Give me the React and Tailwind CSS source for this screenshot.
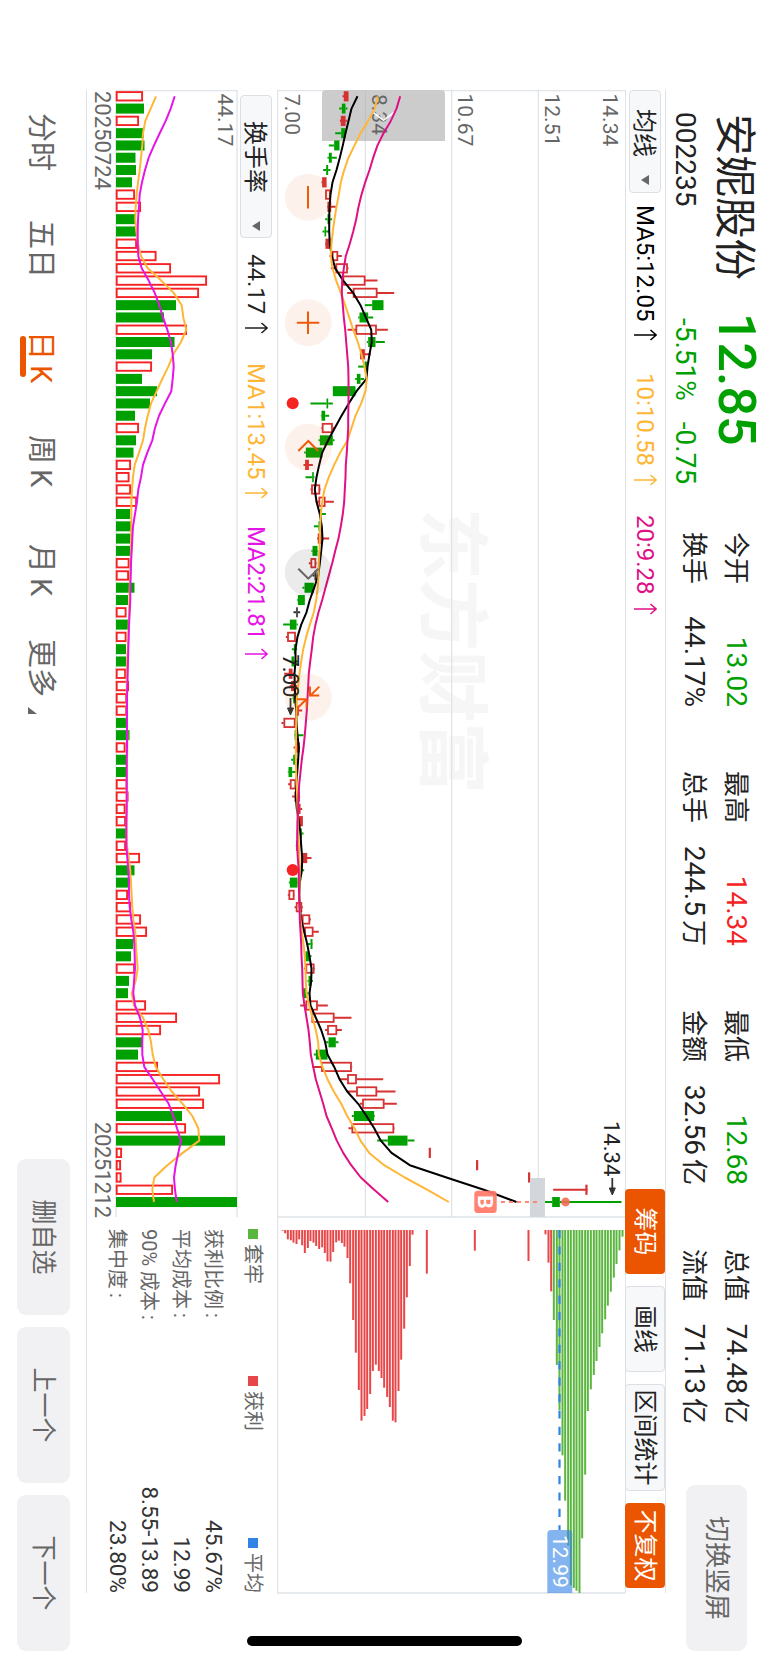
import React from 'react';

// candle: [kind, low, bodyLow, bodyHigh, high]
const candles = [
  ['r', 248, 253, 265, 265], ['g', 238, 246, 257, 263], ['r', 240, 244, 256, 262], ['g', 226, 244, 257, 257],
  ['g', 207, 223, 239, 239], ['g', 203, 207, 216, 231], ['g', 190, 199, 205, 212], ['r', 185, 188, 199, 199],
  ['r', 196, 197, 212, 212], ['r', 202, 204, 213, 228], ['g', 196, 203, 211, 217], ['g', 188, 194, 199, 210],
  ['r', 196, 198, 211, 211], ['r', 209, 217, 234, 246], ['r', 213, 228, 263, 266], ['r', 246, 249, 316, 353],
  ['r', 262, 280, 352, 403], ['g', 315, 337, 371, 371], ['g', 295, 299, 325, 340], ['r', 263, 288, 350, 384],
  ['g', 321, 325, 347, 375], ['r', 300, 302, 314, 333], ['g', 295, 314, 323, 323], ['g', 286, 291, 302, 313],
  ['g', 219, 219, 287, 293], ['g', 152, 200, 205, 219], ['g', 183, 185, 196, 208], ['r', 185, 187, 218, 222],
  ['g', 176, 180, 219, 224], ['g', 133, 138, 188, 190], ['r', 131, 137, 146, 159], ['g', 137, 157, 162, 164],
  ['r', 152, 155, 180, 182], ['r', 168, 177, 196, 222], ['g', 178, 181, 185, 198], ['g', 162, 176, 182, 182],
  ['r', 172, 175, 184, 208], ['g', 155, 158, 173, 175], ['r', 147, 153, 168, 170], ['k', 158, 164, 170, 178],
  ['g', 128, 134, 162, 165], ['g', 112, 114, 135, 136], ['k', 101, 109, 114, 121], ['g', 70, 90, 110, 114],
  ['r', 78, 83, 107, 109], ['g', 96, 102, 108, 112], ['g', 91, 95, 103, 115], ['r', 73, 88, 97, 104],
  ['r', 90, 95, 105, 112], ['g', 98, 100, 108, 110], ['r', 108, 112, 116, 127], ['r', 65, 72, 106, 108],
  ['g', 104, 105, 109, 131], ['r', 101, 108, 119, 121], ['g', 94, 100, 108, 110], ['g', 84, 86, 97, 115],
  ['r', 85, 91, 108, 110], ['r', 97, 105, 119, 121], ['r', 110, 117, 121, 127], ['r', 112, 117, 128, 128],
  ['g', 118, 120, 126, 131], ['r', 108, 110, 116, 118], ['r', 124, 128, 141, 155], ['g', 118, 122, 127, 133],
  ['g', 87, 90, 113, 115], ['r', 84, 87, 103, 104], ['r', 104, 109, 126, 129], ['r', 123, 127, 150, 153],
  ['r', 131, 134, 160, 177], ['g', 140, 152, 158, 159], ['g', 134, 137, 149, 155], ['r', 133, 138, 163, 165],
  ['g', 143, 146, 155, 159], ['g', 127, 130, 141, 146], ['r', 121, 138, 173, 204], ['r', 155, 156, 223, 275],
  ['r', 196, 203, 231, 246], ['g', 199, 206, 228, 236], ['g', 162, 168, 203, 205], ['r', 158, 185, 275, 277],
  ['r', 238, 263, 290, 370], ['r', 263, 290, 351, 407], ['r', 300, 308, 373, 411], ['g', 276, 282, 343, 345],
  ['r', 266, 276, 402, 404], ['g', 352, 384, 443, 464], ['r', 511, 511, 512, 512], ['r', 653, 653, 654, 654],
  ['r', 809, 809, 810, 810], ['r', 880, 981, 982, 983], ['g', 854, 877, 900, 1085],
];

const ma5 = [
  293, 275, 266, 257, 249, 240, 230, 218, 212, 209, 208, 208, 210, 216, 226, 250, 280, 302, 318, 334, 336, 329, 323,
  320, 290, 267, 245, 225, 205, 187, 178, 170, 165, 170, 180, 186, 188, 184, 180, 175, 163, 150, 140, 124, 113, 107,
  107, 104, 105, 106, 109, 110, 113, 117, 115, 112, 109, 108, 111, 117, 122, 124, 127, 126, 120, 118, 120, 124, 133,
  142, 149, 155, 154, 149, 152, 168, 184, 196, 203, 223, 239, 262, 295, 320, 343, 363, 395, 450, 560, 672, 770,
];
const ma10 = [
  354, 345, 325, 302, 284, 266, 253, 243, 237, 230, 224, 219, 215, 213, 218, 229, 243, 256, 268, 280, 294, 305, 314,
  321, 317, 304, 287, 275, 263, 241, 223, 207, 194, 187, 183, 181, 180, 179, 177, 176, 174, 169, 162, 150, 139, 130,
  124, 119, 115, 111, 110, 109, 109, 108, 108, 109, 110, 112, 113, 114, 115, 117, 119, 120, 119, 118, 119, 122, 126,
  131, 135, 137, 138, 140, 148, 158, 168, 175, 177, 188, 203, 222, 244, 262, 284, 302, 328, 373, 435, 503, 567,
];
const ma20 = [
  421, 410, 393, 371, 353, 340, 329, 316, 305, 296, 289, 280, 270, 258, 252, 247, 246, 249, 252, 256, 259, 262, 265,
  266, 266, 266, 265, 265, 263, 261, 258, 257, 255, 253, 249, 243, 236, 226, 217, 207, 197, 187, 176, 167, 160, 156,
  151, 147, 145, 143, 141, 138, 135, 131, 126, 122, 118, 116, 115, 113, 112, 112, 114, 117, 117, 118, 119, 120, 122,
  124, 125, 127, 128, 129, 134, 140, 146, 150, 153, 160, 168, 179, 190, 200, 216, 231, 250, 274, 303, 343, 385,
];

// turnover: negative values are falling days
const turnover = [
  27, -28, 23, -28, -28.5, -19.5, -20, -16, 19, 25, -20, -20, 21, 40.5, 55, 91, 83, -60, -48, 71, -58.5, -36, 36, -26,
  -41, -34, -19, 23, -20, -17.5, 15, 13.5, 15, 21, -14, -15, -15, -15, 13.5, 13, -18.5, -12, 10.5, -12, 10.5, -10, -10,
  10, 13, 11, 11, -11, -13.5, 9.5, -10, -10, 11.5, 12.5, 9.5, 10, -10, 10, 24, -18.5, -14, 12, 15, 25, 31, -17, -15,
  19, -13, -12, 30, 61, 45, -27, -22, 42, 104, 84, 88, -66, 70, -109, 6, 5, 5.5, 57, -121,
];
const turnoverMa1 = [
  229, 213, 197, 190, 188, 184, 180, 175, 171, 168, 167, 170, 175, 184, 204, 245, 282, 306, 311, 320, 304, 281, 266,
  248, 231, 214, 204, 196, 190, 178, 165, 160, 157, 155, 155, 155, 154, 154, 153, 152, 150, 149, 148, 147, 146, 144,
  142, 141, 141, 141, 141, 142, 143, 143, 142, 142, 141, 141, 141, 141, 141, 142, 147, 152, 154, 156, 158, 161, 167,
  169, 171, 174, 168, 156, 163, 190, 206, 214, 219, 228, 251, 276, 309, 338, 356, 359, 309, 263, 224, 218, 223,
];
const turnoverMa2 = [
  285, 273, 258, 240, 223, 207, 196, 187, 180, 178, 175, 174, 174, 176, 186, 207, 225, 239, 250, 263, 274, 279, 282,
  279, 275, 256, 238, 226, 218, 203, 190, 184, 176, 172, 166, 160, 158, 156, 154, 153, 152, 152, 150, 148, 147, 146,
  145, 144, 143, 142, 142, 142, 142, 142, 141, 141, 141, 141, 141, 140, 140, 140, 143, 146, 148, 148, 150, 155, 161,
  164, 165, 166, 163, 161, 166, 181, 189, 188, 188, 194, 219, 243, 267, 281, 292, 304, 296, 288, 283, 286, 291,
];

// chip distribution: [price level, bar end]
const profitChips = [
  [68, 422], [76, 430], [84, 448], [93, 451], [101, 458], [110, 462], [118, 448], [127, 466], [135, 489], [144, 474],
  [152, 453], [161, 458], [169, 468], [178, 477], [187, 472], [195, 489], [203, 514], [212, 515], [220, 486],
  [229, 457], [237, 452], [246, 459], [254, 470], [263, 504], [271, 580], [280, 690], [288, 788], [297, 900],
  [305, 992], [314, 978], [322, 957], [331, 912], [339, 843], [348, 824], [357, 843], [365, 864], [373, 893],
  [382, 921], [390, 951], [399, 992], [407, 997], [416, 903], [424, 809], [433, 716], [441, 622], [450, 528],
  [458, 434], [501, 551], [645, 482], [806, 513], [857, 433], [866, 518], [874, 604],
];
const lossChips = [
  [882, 690], [891, 825], [899, 960], [908, 1096], [916, 1232], [925, 1366], [933, 1486], [942, 1494], [950, 1502],
  [959, 1509], [967, 1345], [976, 1154], [984, 963], [993, 898], [1002, 855], [1010, 813], [1019, 771], [1027, 730],
  [1036, 688], [1044, 647], [1053, 605], [1062, 563], [1070, 522], [1079, 481], [1088, 440],
];

const stats = [
  ['今开', '13.02', '', 'text-[#00a000]', '换手', '44.17%', ''],
  ['最高', '14.34', '', 'text-[#f52323]', '总手', '244.5', '万'],
  ['最低', '12.68', '', 'text-[#00a000]', '金额', '32.56', '亿'],
  ['总值', '74.48', '亿', 'text-[#222]', '流值', '71.13', '亿'],
];

const tabs = [
  ['分时', 'w-[107px]'],
  ['五日', 'w-[111px]'],
  ['日K', 'w-[104px]'],
  ['周K', 'w-[109px]'],
  ['月K', 'w-[95px]'],
  ['更多', 'w-[80px]'],
];

const colors = { r: '#d63232', g: '#00a000', k: '#333' };

const xAt = (i) => 6.3 + i * 12.286;
const priceY = (v) => 347.5 - (v - 53) / 3;
const volY = (v) => 124 - (v - 109) / 3;
const line = (data, toY) => data.map((v, i) => `${xAt(i).toFixed(1)},${toY(v).toFixed(1)}`).join(' ');

function UpArrow() {
  return (
    <svg className="ml-2 h-[23px] w-3" viewBox="0 0 12 23" fill="none" stroke="currentColor" strokeWidth="1.6">
      <path d="M6 23V.8M1 6.500l5-5.700 5 5.700" />
    </svg>
  );
}

function Indicator({ children, className }) {
  return <div className={`flex items-center text-[24px] leading-8 ${className}`}>{children}<UpArrow /></div>;
}

function Select({ children, className }) {
  return (
    <div className={`flex h-8 items-center rounded border border-[#dcdfe4] bg-[#f6f8fa] pt-0.5 text-[24px] leading-none text-[#222] ${className}`}>
      {children}
      <svg className="mb-0.5 ml-auto h-2 w-[10px]" viewBox="0 0 10 8"><path d="M0 0h10L5 8z" fill="#666" /></svg>
    </div>
  );
}

function Candle({ data, i }) {
  const [kind, low, bodyLow, bodyHigh, high] = data;
  const x = xAt(i);
  const c = colors[kind];
  const top = priceY(bodyHigh);
  const h = Math.max(priceY(bodyLow) - top, 1);
  return (
    <g stroke={c} strokeWidth="2">
      <path d={`M${x} ${priceY(high)}V${top}M${x} ${top + h}V${priceY(low)}`} />
      {kind === 'r' ? (
        <rect x={x - 4.2} y={top + 0.5} width="8.4" height={Math.max(h - 1, 0.4)} fill={h < 4.5 ? c : 'none'} strokeWidth="1.8" />
      ) : (
        <rect x={x - 5} y={top} width="10" height={Math.max(h, 1.6)} fill={c} stroke="none" />
      )}
    </g>
  );
}

function PriceChart() {
  return (
    <svg className="block h-[348px] w-[1504px]" viewBox="0 0 1504 348">
      <text x="418" y="198.500" fontSize="72" fontWeight="700" fill="#f6f6f6" textLength="286">东方财富</text>
      <g stroke="#e0e4e8" strokeWidth="1.3" fill="none">
        <path d="M0 86.7h1127M0 173.3h1127M0 259.7h1127" />
        <path d="M.6 0v347.5h1502.4V0M1127 0v347.5" />
      </g>
      <path d="M51 180v123H4a4 4 0 0 1-4-4V184a4 4 0 0 1 4-4z" fill="#ccc" />
      <path d="M0 259.7h51" stroke="#c0c0c3" />
      <g fontSize="21" fill="#666">
        <text x="3.500" y="22.5">14.34</text>
        <text x="3.500" y="80.5">12.51</text>
        <text x="3.500" y="167">10.67</text>
        <text x="4" y="253.5">8.34</text>
        <text x="4" y="340">7.00</text>
      </g>
      <path d="M22.3 252l8-10.5-8-10.5" fill="none" stroke="#fff" strokeWidth="1.6" />

      {candles.map((c, i) => <Candle key={i} data={c} i={i} />)}
      <rect x="1088" y="80" width="39" height="15" fill="#d3d6db" />
      <g fill="none" strokeWidth="2" strokeLinejoin="round">
        <polyline points={line(ma5, priceY)} stroke="#000" />
        <polyline points={line(ma10, priceY)} stroke="#ffb636" />
        <polyline points={line(ma20, priceY)} stroke="#df1086" />
      </g>

      <circle cx="313.3" cy="332.3" r="6" fill="#f52323" />
      <circle cx="780" cy="332.3" r="6" fill="#f52323" />
      <path d="M1112 124V86" stroke="#ff8674" strokeWidth="1.8" strokeDasharray="4 4" />
      <circle cx="1112" cy="59.5" r="4.4" fill="#f36b52" fillOpacity=".9" />
      <rect x="1100.7" y="128.3" width="22.4" height="22.4" rx="3.5" fill="#ff7767" fillOpacity=".92" />
      <text x="1111.9" y="147" fontSize="21" fontWeight="700" fill="#fff" textAnchor="middle">B</text>

      <g fontSize="22" fill="#222">
        <text x="564.500" y="342.5">7.00</text>
        <text x="1031" y="21">14.34</text>
      </g>
      <g stroke="#333" fill="#333" strokeWidth="1.8">
        <path d="M608 334.500h11" />
        <path d="M618 331.500l7 3-7 3z" strokeWidth="1" />
        <path d="M1088 12.700h11" />
        <path d="M1098 9.700l7 3-7 3z" strokeWidth="1" />
      </g>

      {/* floating zoom / pan controls */}
      <g fill="#eb5500" fillOpacity=".08">
        <circle cx="107.3" cy="316.7" r="23.5" />
        <circle cx="232.7" cy="316.7" r="23.5" />
        <circle cx="357.3" cy="316.7" r="23.5" />
        <circle cx="607.3" cy="316.7" r="23.5" />
      </g>
      <circle cx="482.3" cy="316.7" r="23.5" fillOpacity=".08" />
      <g fill="none" stroke="#f05a0a" strokeWidth="2">
        <path d="M96 317h22.500M221.500 317h22.500M232.700 305.700v22.500" />
        <path d="M361 306.700l-10 10 10 10" />
        <path d="M596.600 305.700l9 9M596.600 315h9v-9.300M618.300 327.700l-9-9M609.300 327.700v-9.300h9" />
      </g>
      <path d="M478.700 306.700l10 10-10 10" fill="none" stroke="#666" strokeWidth="2" />

      {profitChips.map(([p, end]) => (
        <rect key={p} x="1140" y={priceY(p) - 1} width={(end - 420) / 3} height="2" fill="#e8474a" />
      ))}
      {lossChips.map(([p, end]) => (
        <rect key={p} x="1140" y={priceY(p) - 1} width={(end - 420) / 3} height="2" fill="#5bb63f" />
      ))}
      <path d={`M1140 ${priceY(899)}h300`} stroke="#3282e6" strokeWidth="2.2" strokeDasharray="8.200 8.200" />
      <path d="M1444 52.700h59v25h-59a4 4 0 0 1-4-4v-17a4 4 0 0 1 4-4z" fill="#3282e6" fillOpacity=".6" />
      <text x="1445" y="72.500" fontSize="21" fill="#fff">12.99</text>
    </svg>
  );
}

function TurnoverChart() {
  return (
    <svg className="block h-[151px] w-[1128px]" viewBox="0 0 1128 151">
      <path d="M1127 3H.6v121H1127" fill="none" stroke="#dfe2e6" strokeWidth="1.3" />
      <text x="3.500" y="22.500" fontSize="21" fill="#666">44.17</text>
      {turnover.map((v, i) => {
        const h = Math.abs(v);
        return v < 0 ? (
          <rect key={i} x={xAt(i) - 5} y={124 - h} width="10" height={h} fill="#00a000" />
        ) : (
          <rect key={i} x={xAt(i) - 4.200} y={124.900 - h} width="8.400" height={h - 1.600} fill="none" stroke="#f52323" strokeWidth="1.900" />
        );
      })}
      <g fill="none" strokeWidth="2" strokeLinejoin="round">
        <polyline points={line(turnoverMa1, volY)} stroke="#ffb636" />
        <polyline points={line(turnoverMa2, volY)} stroke="#e614e6" />
      </g>
      <g fontSize="22" fill="#666">
        <text x="1" y="145">20250724</text>
        <text x="1128" y="145" textAnchor="end" textLength="96">20251212</text>
      </g>
    </svg>
  );
}

function Header() {
  return (
    <header className="flex h-[102px] w-[1561px] shrink-0 pl-[22px]">
      <div className="w-[201px] pt-[7px] text-[#222]">
        <div className="relative left-0.5 top-0.5 text-[41.500px] leading-[50px]">安妮股份</div>
        <div className="mt-[11px] text-[28px] leading-[30px]">002235</div>
      </div>
      <div className="w-[219px] pt-[7px] text-[#00a000]">
        <div className="text-[52px] font-medium leading-[50px]">12.85</div>
        <div className="mt-[11px] flex gap-[21px] pl-[5px] text-[28px] leading-[30px]">
          <span>-5.51%</span>
          <span>-0.75</span>
        </div>
      </div>
      <div className="flex gap-[64px] pt-[11px] text-[28px] leading-[41px] text-[#222]">
        {stats.map(([a, av, au, color, b, bv, bu]) => (
          <div key={a} className="w-[175px]">
            <div className="flex items-baseline justify-between">
              <span className="text-[26px]">{a}</span>
              <span className={color}>{av}{au && <span className="ml-1 text-[26px]">{au}</span>}</span>
            </div>
            <div className="flex items-baseline justify-between">
              <span className="text-[26px]">{b}</span>
              <span>{bv}{bu && <span className="ml-1 text-[26px]">{bu}</span>}</span>
            </div>
          </div>
        ))}
      </div>
      <button className="ml-auto mt-[21px] h-[61px] w-[166px] rounded-[9px] bg-[#f1f1f3] text-[26px] text-[#666]">切换竖屏</button>
    </header>
  );
}

function Toolbar() {
  return (
    <div className="flex h-[41px] w-[1503px] items-center border-y border-[#e0e2e6]">
      <Select className="w-[103px] pl-[18px] pr-[7px]">均线</Select>
      <Indicator className="ml-3 w-[168px] text-black">MA5:12.05</Indicator>
      <Indicator className="w-[142px] text-[#ffb636]">10:10.58</Indicator>
      <Indicator className="text-[#df1086]">20:9.28</Indicator>
      <div className="ml-auto mr-[5px] flex gap-3 text-[24px] leading-[38px]">
        <button className="h-10 w-[85px] rounded bg-[#eb5500] text-white">筹码</button>
        <button className="h-10 w-[86px] rounded border border-[#dcdfe4] bg-[#f6f8fa] text-[#222]">画线</button>
        <button className="h-10 w-[107px] rounded border border-[#dcdfe4] bg-[#f6f8fa] text-[#222]">区间统计</button>
        <button className="h-10 w-[85px] rounded bg-[#eb5500] text-white">不复权</button>
      </div>
    </div>
  );
}

function ChipSummary() {
  const rows = [
    ['获利比例', '45.67%'],
    ['平均成本', '12.99'],
    ['90% 成本', '8.55-13.89'],
    ['集中度', '23.80%'],
  ];
  return (
    <div className="w-[364px] text-[20px] text-[#666]">
      <div className="flex h-[48px] items-center leading-none">
        <div className="flex w-[147px] items-center gap-[5px]"><i className="h-[10px] w-[10px] bg-[#5bb63f]" />套牢</div>
        <div className="flex items-center gap-[5px]"><i className="h-[10px] w-[10px] bg-[#e8474a]" />获利</div>
        <div className="ml-auto flex items-center gap-[5px]"><i className="h-[10px] w-[10px] bg-[#3282e6]" />平均</div>
      </div>
      {rows.map(([label, value]) => (
        <div key={label} className="flex h-8 items-center justify-between">
          <span>{label}<span className="ml-1">:</span></span>
          <span className="text-[22.500px] text-[#333]">{value}</span>
        </div>
      ))}
    </div>
  );
}

function Footer() {
  return (
    <footer className="flex w-[1561px] pl-[23px]">
      <nav className="flex pt-[25px] text-[29px] leading-10 text-[#666]">
        {tabs.map(([name, width]) => (
          <div key={name} className={`${width} ${name === '日K' ? 'text-[#eb5500]' : ''}`}>
            <div className={name.endsWith('K') ? 'tracking-[5px]' : 'flex'}>
              {name}
              {name === '更多' && (
                <svg className="ml-2.5 mt-[24px] h-[9px] w-[7px]" viewBox="0 0 7 9"><path d="M7 0v9H0z" fill="#666" /></svg>
              )}
            </div>
            {name === '日K' && <div className="-mt-[5px] ml-[5px] h-1.5 w-[41px] rounded-full bg-[#eb5500]" />}
          </div>
        ))}
      </nav>
      <div className="ml-auto flex gap-3 pt-4 text-[25px] text-[#666]">
        {['删自选', '上一个', '下一个'].map((t) => (
          <button key={t} className="h-[53px] w-[156px] rounded-[9px] bg-[#f1f1f3]">{t}</button>
        ))}
      </div>
    </footer>
  );
}

export default function App() {
  return (
    <div className="h-[1663px] w-[768px] overflow-hidden bg-white">
      <div className="h-[768px] w-[1663px] origin-top-left translate-x-[768px] rotate-90 whitespace-nowrap pl-[90px] font-[Roboto,'Noto_Sans_CJK_SC',sans-serif]">
        <Header />
        <div className="flex h-[580px]">
          <main className="w-[1503px] shrink-0 border-b border-[#dfe2e6]">
            <Toolbar />
            <PriceChart />
            <div className="flex justify-between">
              <div className="w-[1128px]">
                <div className="flex h-[37px] items-center pl-[5px] pt-1">
                  <Select className="w-[143px] pl-[25px] pr-[6px]">换手率</Select>
                  <Indicator className="ml-4 w-[109px] text-[#222]">44.17</Indicator>
                  <Indicator className="w-[163px] text-[#ffb636]">MA1:13.45</Indicator>
                  <Indicator className="tracking-[-0.3px] text-[#e614e6]">MA2:21.81</Indicator>
                </div>
                <TurnoverChart />
              </div>
              <ChipSummary />
            </div>
          </main>
          <div className="ml-[43px] mt-[144px] h-[275px] w-[10px] rounded-full bg-black" />
        </div>
        <Footer />
      </div>
    </div>
  );
}
